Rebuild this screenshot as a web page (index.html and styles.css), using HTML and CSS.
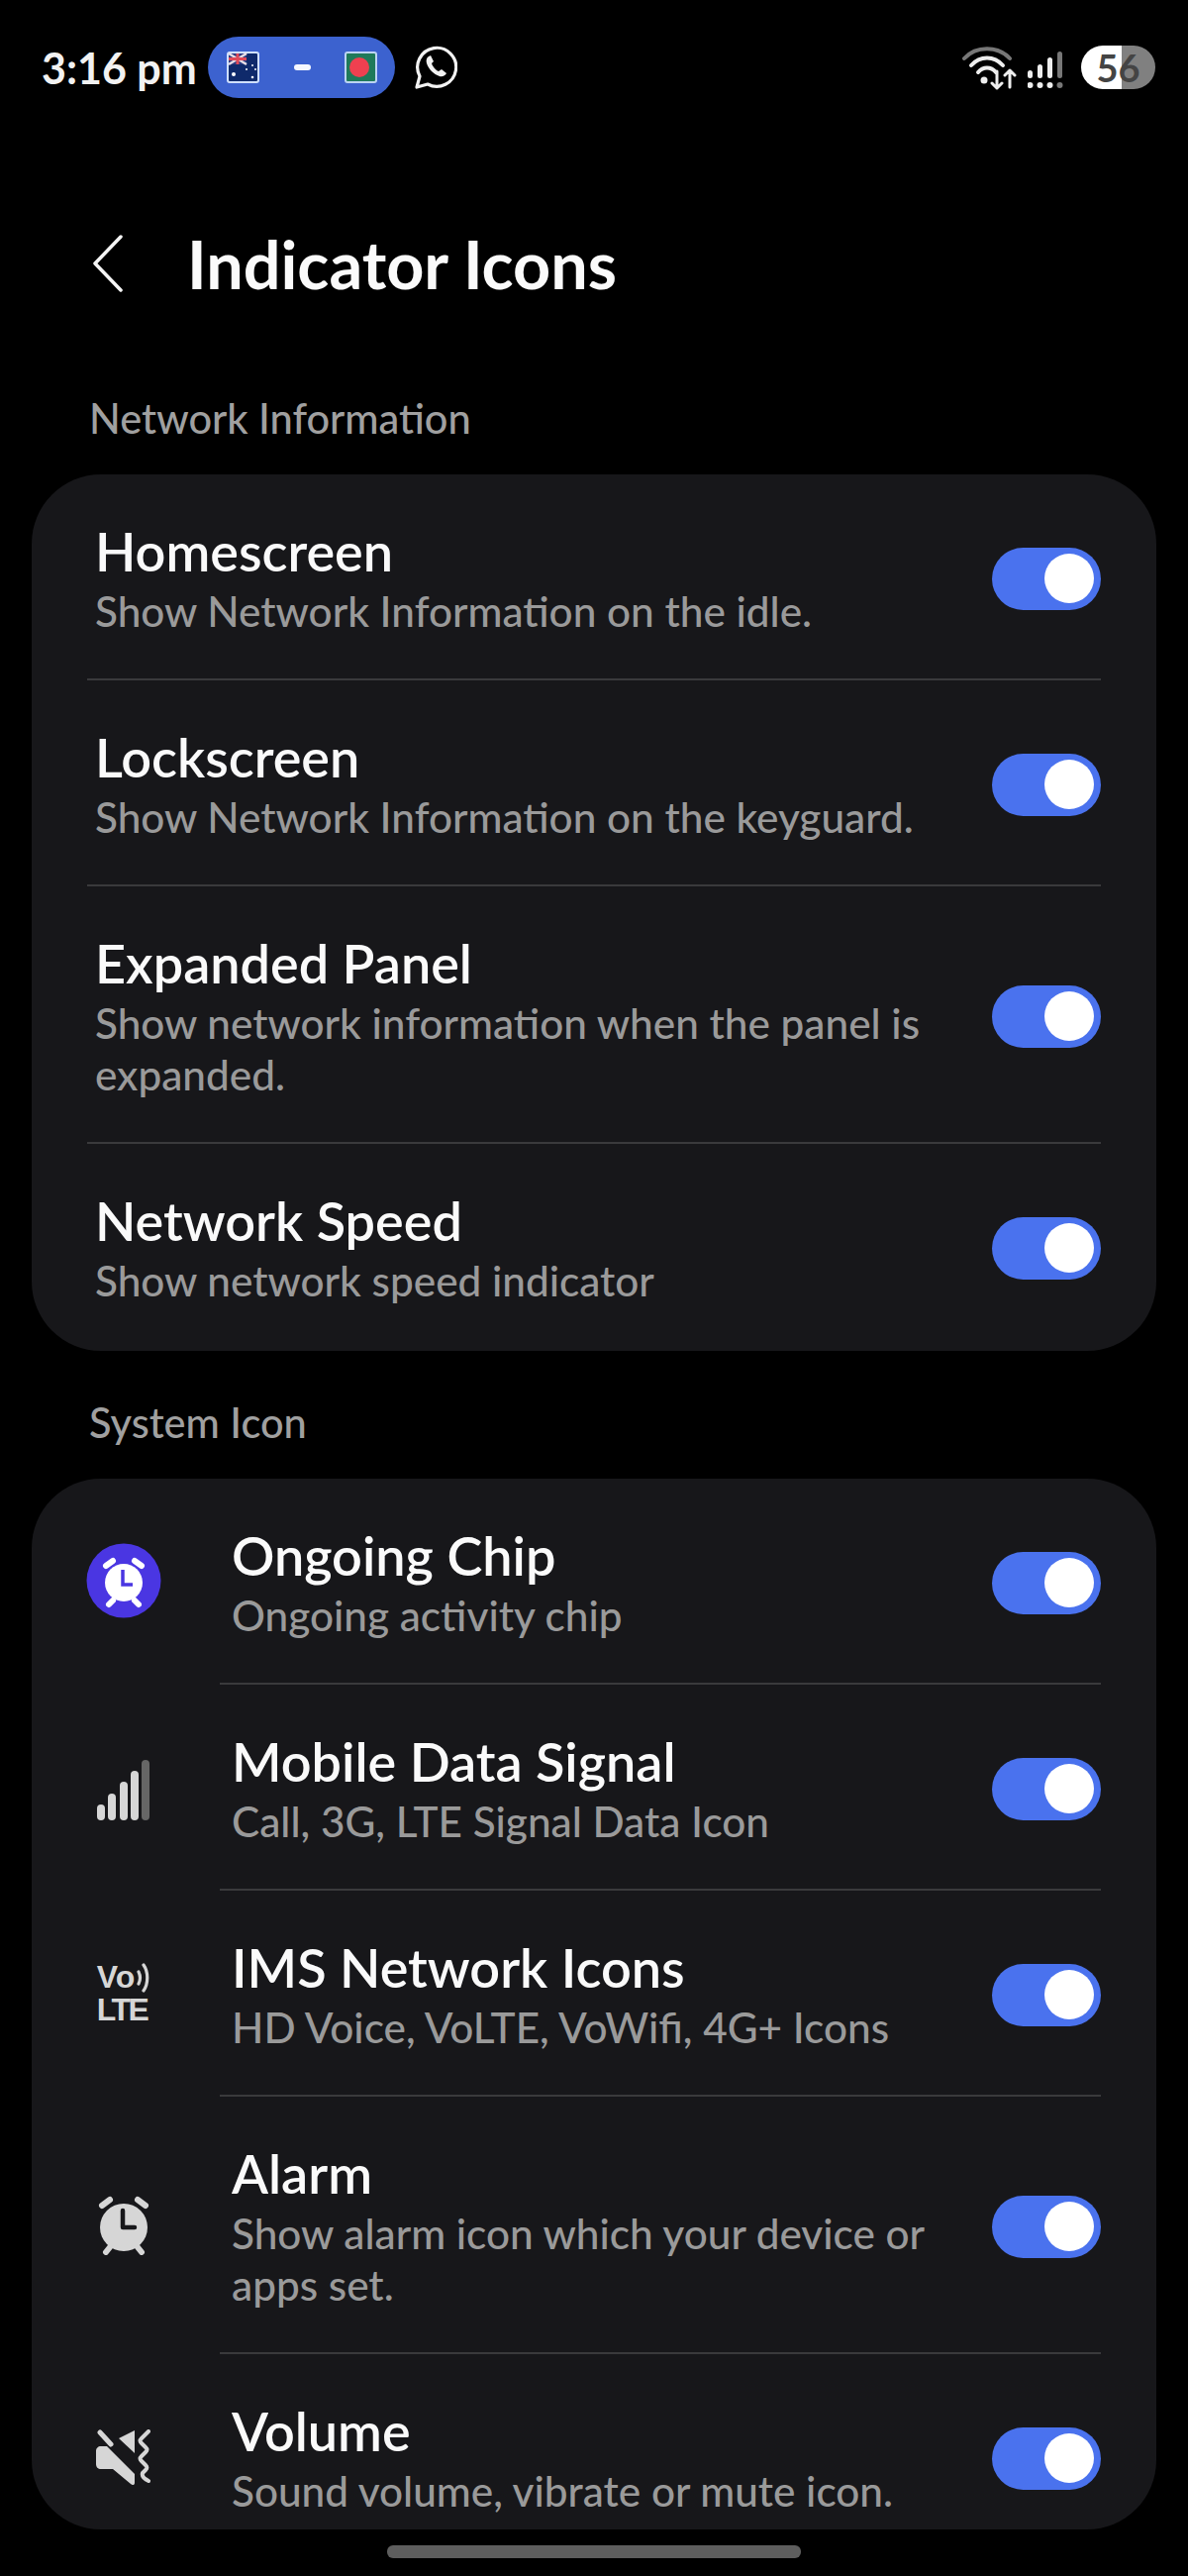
FILE: index.html
```html
<!DOCTYPE html>
<html lang="en">
<head>
<meta charset="utf-8">
<title>Indicator Icons</title>
<link rel="stylesheet" href="styles.css">
</head>
<body>
<div class="page">
  <div class="status">
    <span class="time">3:16 pm</span>
    <div class="pill">
      <svg class="flag" viewBox="0 0 33 32"><rect x="1" y="1" width="31" height="30" rx="2" fill="#0f2a6b" stroke="#cfe0ff" stroke-width="2"/><rect x="2" y="2" width="18" height="11" fill="#2b3a80"/><path d="M2 2l18 11M20 2L2 13" stroke="#e8dfe6" stroke-width="2.5"/><path d="M11 2v11M2 7.500h18" stroke="#e04a5a" stroke-width="3"/><circle cx="7" cy="23" r="2" fill="#fff"/><circle cx="20" cy="18" r="1" fill="#fff"/><circle cx="26" cy="14" r="1" fill="#fff"/><circle cx="29" cy="18" r="1" fill="#fff"/><circle cx="26" cy="26" r="1.300" fill="#fff"/></svg>
      <span class="dash"></span>
      <svg class="flag" viewBox="0 0 33 32"><rect x="1" y="1" width="31" height="30" rx="2" fill="#1f7a5a" stroke="#bcd4f2" stroke-width="2"/><circle cx="15" cy="16" r="10" fill="#ef4050"/></svg>
    </div>
    <svg class="wa" viewBox="0 0 44 46"><path d="M3 43l3-11A19.500 19.500 0 1 1 14 40z" fill="none" stroke="#f2f2f2" stroke-width="3.200" stroke-linejoin="round"/><path d="M15 12c-2 1-3 4-2 7 2 6 7 11 13 13 3 1 6-1 7-3l-5-4-3 2c-3-1-6-5-7-8l2-2-3-6z" fill="#f2f2f2"/></svg>
    <div class="status-right">
      <svg class="wifi" viewBox="0 0 56 50"><path d="M3 16C15 3 37 3 49 16" fill="none" stroke="#777" stroke-width="4" stroke-linecap="round"/><path d="M10 23C19 13 33 13 42 23" fill="none" stroke="#eee" stroke-width="4" stroke-linecap="round"/><path d="M17 30C22 24 30 24 35 30" fill="none" stroke="#eee" stroke-width="4" stroke-linecap="round"/><circle cx="23" cy="38" r="3.500" fill="#eee"/><path d="M36 29v17M31 41l5 5 5-5M49 45V28M44 33l5-5 5 5" fill="none" stroke="#eee" stroke-width="3" stroke-linecap="round" stroke-linejoin="round"/></svg>
      <svg class="bars" viewBox="0 0 38 38"><g fill="#eee"><rect x="0" y="19" width="5" height="8" rx="2.500"/><rect x="10" y="13" width="5" height="14" rx="2.500"/><rect x="20" y="6" width="5" height="21" rx="2.500"/><circle cx="2.500" cy="34" r="3"/><circle cx="12.500" cy="34" r="3"/><circle cx="22.500" cy="34" r="3"/></g><g fill="#777"><rect x="30" y="0" width="5" height="27" rx="2.500"/><circle cx="32.500" cy="34" r="3"/></g></svg>
      <div class="battery"><span class="battery-num">56</span></div>
    </div>
  </div>

  <header class="appbar">
    <svg class="back" viewBox="0 0 32 58"><path d="M29 2L3 29l26 27" fill="none" stroke="#f5f5f5" stroke-width="3.500" stroke-linecap="round" stroke-linejoin="round"/></svg>
    <h1 class="title">Indicator Icons</h1>
  </header>

  <div class="section">Network Information</div>
  <section class="card">
    <div class="row">
      <div class="row-main">
        <div class="text"><div class="name">Homescreen</div><div class="desc">Show Network Information on the idle.</div></div>
        <span class="toggle"></span>
      </div>
    </div>
    <div class="row">
      <div class="row-main">
        <div class="text"><div class="name">Lockscreen</div><div class="desc">Show Network Information on the keyguard.</div></div>
        <span class="toggle"></span>
      </div>
    </div>
    <div class="row">
      <div class="row-main">
        <div class="text"><div class="name">Expanded Panel</div><div class="desc">Show network information when the panel is expanded.</div></div>
        <span class="toggle"></span>
      </div>
    </div>
    <div class="row">
      <div class="row-main last">
        <div class="text"><div class="name">Network Speed</div><div class="desc">Show network speed indicator</div></div>
        <span class="toggle"></span>
      </div>
    </div>
  </section>

  <div class="section section-second">System Icon</div>
  <section class="card card-clipped">
    <div class="row">
      <div class="row-icon">
        <svg class="chip" viewBox="0 0 76 76"><circle cx="38" cy="38" r="37.500" fill="#4a36e2"/><circle cx="38" cy="40" r="19" fill="#fff"/><path d="M20 23l7-5M56 23l-7-5M27 58l-4 4M49 58l4 4" stroke="#fff" stroke-width="6" stroke-linecap="round"/><path d="M37 27v15h10" fill="none" stroke="#4a36e2" stroke-width="3.500"/></svg>
      </div>
      <div class="row-main">
        <div class="text"><div class="name">Ongoing Chip</div><div class="desc">Ongoing activity chip</div></div>
        <span class="toggle"></span>
      </div>
    </div>
    <div class="row">
      <div class="row-icon">
        <svg class="sig" viewBox="0 0 54 62"><g fill="#d6d6d6"><rect x="0" y="45" width="8" height="16" rx="4"/><rect x="11" y="34" width="8" height="27" rx="4"/><rect x="23" y="22" width="8" height="39" rx="4"/><rect x="34" y="11" width="8" height="50" rx="4"/></g><rect x="45" y="0" width="8" height="61" rx="4" fill="#666"/></svg>
      </div>
      <div class="row-main">
        <div class="text"><div class="name">Mobile Data Signal</div><div class="desc">Call, 3G, LTE Signal Data Icon</div></div>
        <span class="toggle"></span>
      </div>
    </div>
    <div class="row">
      <div class="row-icon">
        <div class="volte">
          <div class="volte-top">Vo<svg class="volte-arcs" viewBox="0 0 14 30"><path d="M2 9c2 4 2 8 0 12M7 2c5 7 5 19 0 26" fill="none" stroke="#d6d6d6" stroke-width="3.200" stroke-linecap="round"/></svg></div>
          <div class="volte-bottom">LTE</div>
        </div>
      </div>
      <div class="row-main">
        <div class="text"><div class="name">IMS Network Icons</div><div class="desc">HD Voice, VoLTE, VoWifi, 4G+ Icons</div></div>
        <span class="toggle"></span>
      </div>
    </div>
    <div class="row">
      <div class="row-icon">
        <svg class="alarm" viewBox="0 0 56 60"><circle cx="28" cy="32" r="24" fill="#d6d6d6"/><path d="M6 10l8-6M50 10l-8-6M14 52l-4 5M42 52l4 5" stroke="#d6d6d6" stroke-width="6" stroke-linecap="round"/><path d="M27 15v17h12" fill="none" stroke="#17171a" stroke-width="4.500" stroke-linecap="round" stroke-linejoin="round"/></svg>
      </div>
      <div class="row-main">
        <div class="text"><div class="name">Alarm</div><div class="desc">Show alarm icon which your device or apps set.</div></div>
        <span class="toggle"></span>
      </div>
    </div>
    <div class="row">
      <div class="row-icon">
        <svg class="mute" viewBox="0 0 58 58"><path d="M40 1v23L24 9z" fill="#d6d6d6"/><path d="M1 22c0-3 2-5 5-5h6l28 28v9c0 2-2 3-4 1L18 40H6c-3 0-5-2-5-5z" fill="#d6d6d6"/><path d="M5 3l11 12" stroke="#d6d6d6" stroke-width="5" stroke-linecap="round"/><path d="M54 2L47 9c-2 2-2 3 0 5l4 4c2 2 2 3 0 5l-4 4c-2 2-2 3 0 5l4 4c2 2 2 3 0 5l-3 3c-1 3 2 6 6 8" fill="none" stroke="#d6d6d6" stroke-width="4" stroke-linecap="round" stroke-linejoin="round"/></svg>
      </div>
      <div class="row-main last">
        <div class="text"><div class="name">Volume</div><div class="desc">Sound volume, vibrate or mute icon.</div></div>
        <span class="toggle"></span>
      </div>
    </div>
  </section>

  <div class="home-bar"></div>
</div>
</body>
</html>
```

FILE: styles.css
```css
* { box-sizing: border-box; }
html, body { margin: 0; padding: 0; background: #000; }
body { font-family: Lato, "Noto Sans", sans-serif; color: #fafafa; }
.page { width: 1200px; height: 2601px; overflow: hidden; display: flex; flex-direction: column; background: #000; }

.status { height: 136px; display: flex; align-items: center; padding: 0 33px 0 42px; }
.time { font-size: 43px; font-weight: 700; color: #f2f2f2; width: 168px; white-space: nowrap; }
.pill { width: 189px; height: 62px; border-radius: 31px; background: #3c62cf; display: flex; align-items: center; justify-content: space-between; padding: 0 18px 0 19px; }
.flag { width: 33px; height: 32px; }
.dash { width: 17px; height: 6px; border-radius: 3px; background: #f5f7ff; }
.wa { width: 44px; height: 46px; margin-left: 19px; }
.status-right { margin-left: auto; display: flex; align-items: center; }
.wifi { width: 56px; height: 50px; }
.bars { width: 38px; height: 38px; margin-left: 11px; margin-top: 6px; }
.battery { width: 75px; height: 44px; margin-left: 16px; border-radius: 22px; background: linear-gradient(90deg, #fff 0, #fff 41px, #808080 41px); display: flex; align-items: center; justify-content: center; }
.battery-num { font-size: 38px; font-weight: 700; color: #444; }

.appbar { margin-top: 100px; height: 60px; display: flex; align-items: center; padding-left: 93px; }
.back { width: 32px; height: 58px; }
.title { margin: 0 0 0 64px; font-size: 66.5px; font-weight: 700; line-height: 60px; color: #fafafa; white-space: nowrap; }

.section { margin-top: 96px; height: 60px; line-height: 60px; padding-left: 90px; font-size: 41.5px; font-weight: 500; color: #a0a0a0; }
.section-second { margin-top: 42px; }

.card { margin: 27px 32px 0; background: #17171a; border-radius: 70px; overflow: hidden; flex: none; }
.card-clipped { height: 1061px; }

.row { display: flex; }
.row-icon { width: 190px; flex: none; display: flex; align-items: center; justify-content: center; padding-right: 4px; }
.row-main { flex: 1; min-width: 0; margin: 0 56px; display: flex; align-items: center; justify-content: space-between; padding: 46px 0 42px 8px; border-bottom: 2px solid #3a3a3c; }
.row-icon + .row-main { margin-left: 0; padding-left: 12px; }
.row-main.last { border-bottom: 0; padding-bottom: 45px; }
.text { width: 860px; }
.row-icon + .row-main .text { width: 740px; }
.name { font-size: 54px; line-height: 64px; font-weight: 600; color: #fafafa; white-space: nowrap; }
.desc { font-size: 42.3px; line-height: 52px; font-weight: 500; color: #9a9a9a; margin-top: 2px; }

.toggle { width: 110px; height: 63px; border-radius: 32px; background: #4a72ee; display: flex; align-items: center; justify-content: flex-end; padding-right: 7px; flex: none; }
.toggle::after { content: ""; width: 50px; height: 50px; border-radius: 50%; background: #fff; }

.chip { width: 76px; height: 76px; margin-top: -2px; }
.sig { width: 54px; height: 62px; margin-top: 6px; }
.volte { color: #d6d6d6; font-family: "Liberation Sans", Arial, sans-serif; font-size: 32px; line-height: 33px; font-weight: 700; }
.volte-top { display: flex; align-items: center; }
.volte-arcs { width: 14px; height: 30px; margin-left: 2px; }
.volte-bottom { letter-spacing: -2.500px; }
.alarm { width: 56px; height: 60px; }
.mute { width: 58px; height: 58px; }

.home-bar { width: 418px; height: 13px; border-radius: 6px; background: #5e5e5e; margin: 16px auto 0; flex: none; }
```
